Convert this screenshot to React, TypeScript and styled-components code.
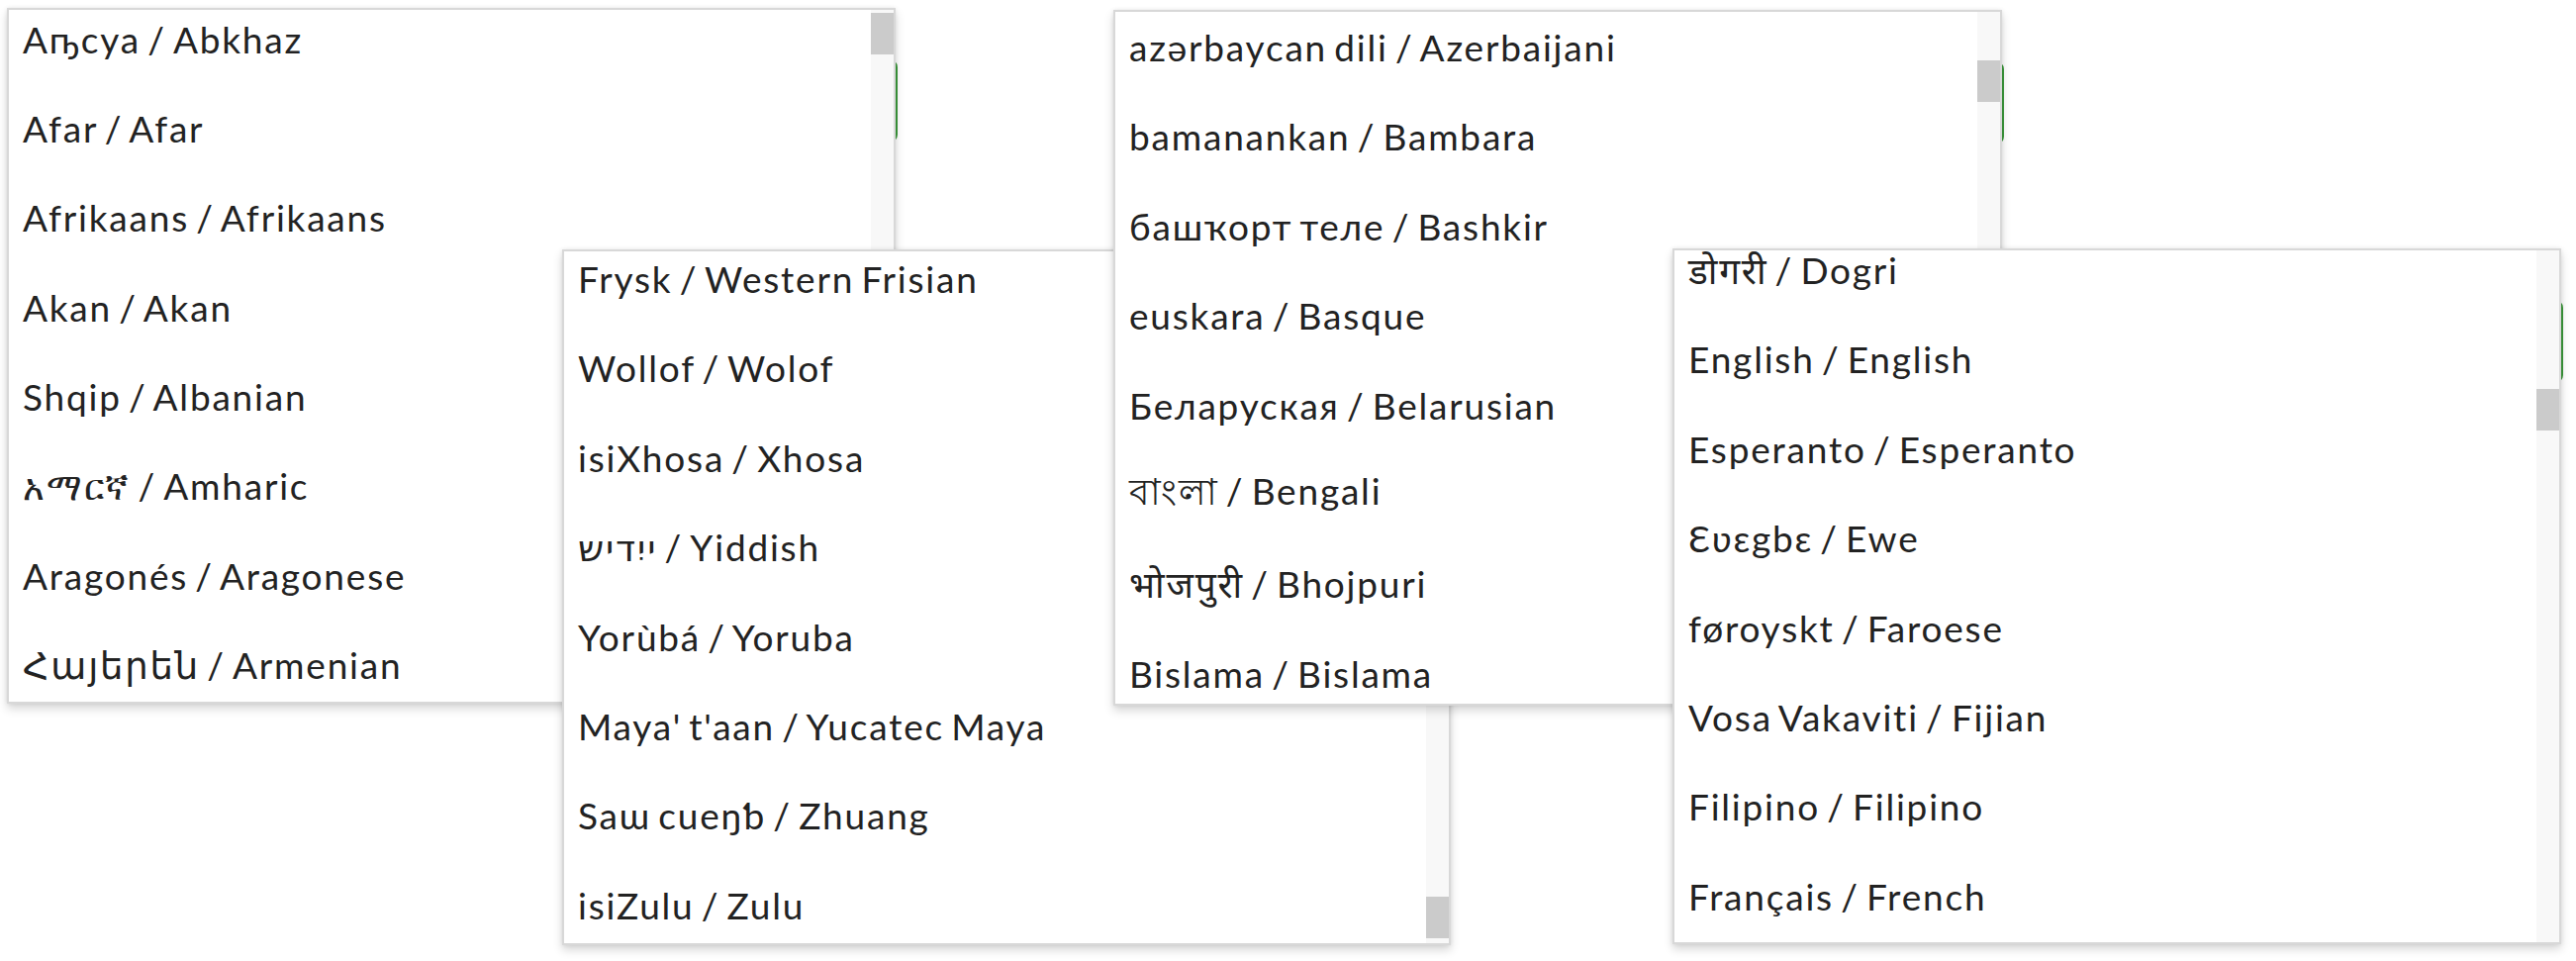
import React from 'react';
import styled, { createGlobalStyle } from 'styled-components';

const GlobalStyle = createGlobalStyle`
  html, body {
    margin: 0;
    padding: 0;
    background: #fff;
  }
  body {
    font-family: 'Lato', 'DejaVu Sans', 'Noto Sans', sans-serif;
    color: #1f1f1f;
  }
`;

type Picker = {
  left: number;
  top: number;
  offset: number;
  thumbTop: number;
  items: string[];
};

const ROW = 90.4;

const pickers: Picker[] = [
  {
    left: 7,
    top: 8,
    offset: 16,
    thumbTop: 3,
    items: [
      'Аҧсуа / Abkhaz',
      'Afar / Afar',
      'Afrikaans / Afrikaans',
      'Akan / Akan',
      'Shqip / Albanian',
      'አማርኛ / Amharic',
      'Aragonés / Aragonese',
      'Հայերեն / Armenian',
      'অসমীয়া / Assamese',
    ],
  },
  {
    left: 568,
    top: 252,
    offset: ROW + 18,
    thumbTop: 652,
    items: [
      'Cymraeg / Welsh',
      'Frysk / Western Frisian',
      'Wollof / Wolof',
      'isiXhosa / Xhosa',
      'ייִדיש / Yiddish',
      'Yorùbá / Yoruba',
      "Maya' t'aan / Yucatec Maya",
      'Saɯ cueŋƅ / Zhuang',
      'isiZulu / Zulu',
    ],
  },
  {
    left: 1125,
    top: 10,
    offset: ROW + 10,
    thumbTop: 49,
    items: [
      'aymar aru / Aymara',
      'azərbaycan dili / Azerbaijani',
      'bamanankan / Bambara',
      'башҡорт теле / Bashkir',
      'euskara / Basque',
      'Беларуская / Belarusian',
      'বাংলা / Bengali',
      'भोजपुरी / Bhojpuri',
      'Bislama / Bislama',
      'bosanski jezik / Bosnian',
    ],
  },
  {
    left: 1690,
    top: 251,
    offset: ROW + 26,
    thumbTop: 140,
    items: [
      'ދިވެހި / Divehi',
      'डोगरी / Dogri',
      'English / English',
      'Esperanto / Esperanto',
      'Ɛʋɛgbɛ / Ewe',
      'føroyskt / Faroese',
      'Vosa Vakaviti / Fijian',
      'Filipino / Filipino',
      'Français / French',
      'Suomi / Finnish',
    ],
  },
];

export default function App() {
  return (
    <>
      <GlobalStyle />
      <Stage>
        {pickers.map((p, i) => (
          <Anchor key={i} $left={p.left} $top={p.top}>
            <SelectBox />
            <Menu>
              <List $offset={p.offset}>
                {p.items.map((item) => (
                  <Option key={item}>{item}</Option>
                ))}
              </List>
              <Track>
                <Thumb $top={p.thumbTop} />
              </Track>
            </Menu>
          </Anchor>
        ))}
      </Stage>
    </>
  );
}

const Stage = styled.div`
  position: relative;
  width: 2603px;
  height: 971px;
  overflow: hidden;
  background: #fff;
`;

const Anchor = styled.div<{ $left: number; $top: number }>`
  position: absolute;
  left: ${({ $left }) => $left}px;
  top: ${({ $top }) => $top}px;
  width: 898px;
  height: 703px;
`;

const SelectBox = styled.div`
  margin-top: 52px;
  height: 84px;
  width: 900px;
  box-sizing: border-box;
  border: 2px solid #3c9a3c;
  border-radius: 8px;
  background: #fff;
`;

const Menu = styled.div`
  position: absolute;
  inset: 0;
  box-sizing: border-box;
  border: 2px solid #d8d8d8;
  background: #fff;
  overflow: hidden;
  box-shadow: 0 5px 9px rgba(0, 0, 0, 0.16), 0 0 4px rgba(0, 0, 0, 0.08);
`;

const List = styled.ul<{ $offset: number }>`
  list-style: none;
  margin: 0;
  padding: 0;
  transform: translateY(-${({ $offset }) => $offset}px);
`;

const Option = styled.li`
  height: ${ROW}px;
  display: flex;
  align-items: center;
  padding-left: 14px;
  font-size: 37px;
  letter-spacing: 1.8px;
  word-spacing: -4px;
  white-space: nowrap;
  color: #222;
`;

const Track = styled.div`
  position: absolute;
  top: 0;
  right: 0;
  bottom: 0;
  width: 23px;
  background: #f8f8f8;
`;

const Thumb = styled.div<{ $top: number }>`
  position: absolute;
  left: 0;
  right: 0;
  top: ${({ $top }) => $top}px;
  height: 42px;
  background: #cbcbcb;
`;
